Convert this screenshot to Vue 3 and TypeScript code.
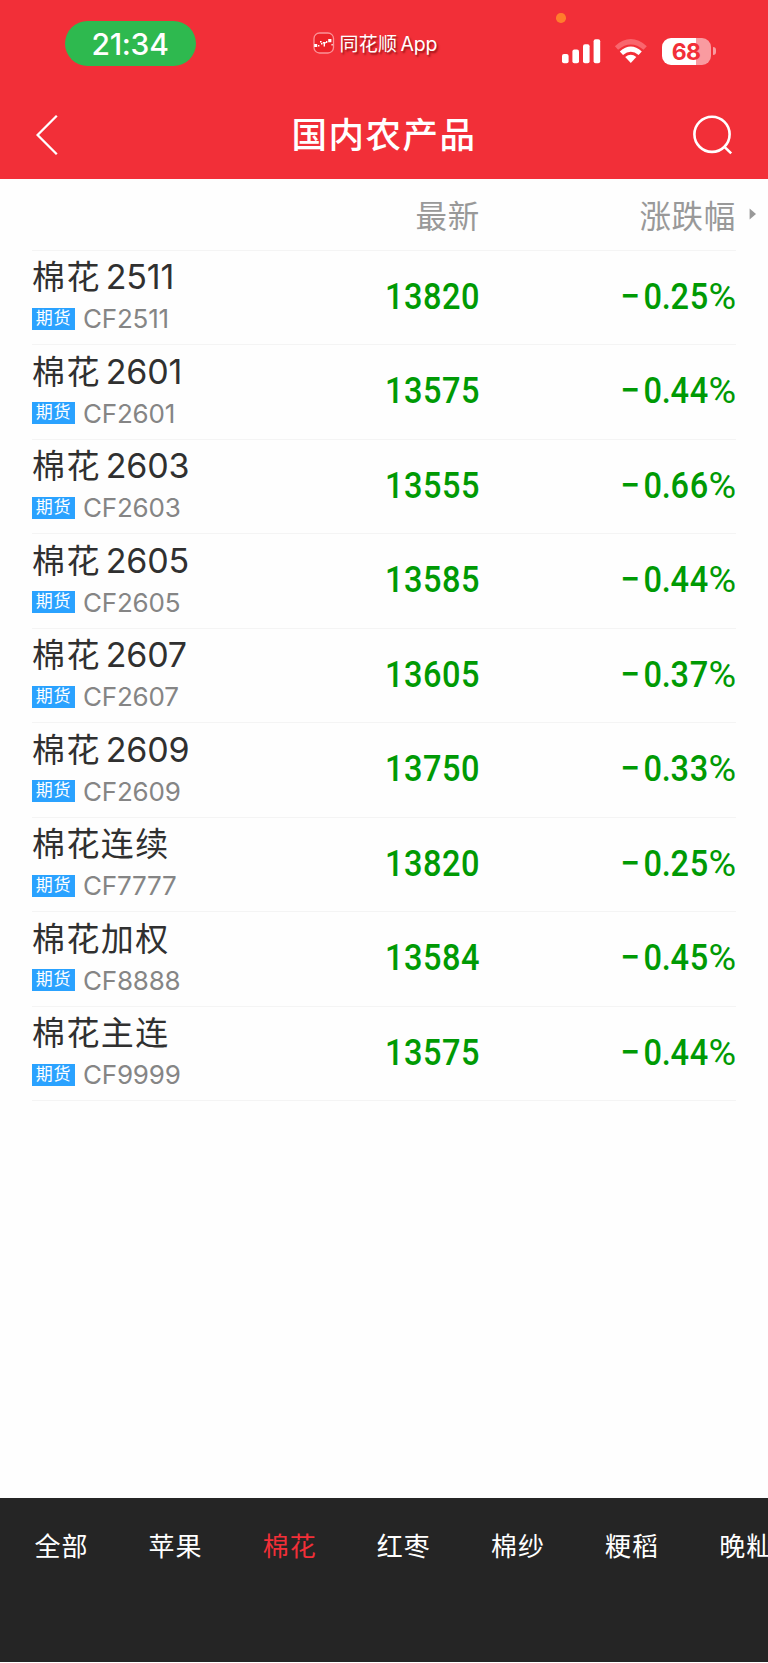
<script setup lang="ts">
interface Quote {
  name: string
  month: string
  code: string
  latest: string
  change: string
}

const quotes: Quote[] = [
  { name: '棉花', month: '2511', code: 'CF2511', latest: '13820', change: '25' },
  { name: '棉花', month: '2601', code: 'CF2601', latest: '13575', change: '44' },
  { name: '棉花', month: '2603', code: 'CF2603', latest: '13555', change: '66' },
  { name: '棉花', month: '2605', code: 'CF2605', latest: '13585', change: '44' },
  { name: '棉花', month: '2607', code: 'CF2607', latest: '13605', change: '37' },
  { name: '棉花', month: '2609', code: 'CF2609', latest: '13750', change: '33' },
  { name: '棉花连续', month: '', code: 'CF7777', latest: '13820', change: '25' },
  { name: '棉花加权', month: '', code: 'CF8888', latest: '13584', change: '45' },
  { name: '棉花主连', month: '', code: 'CF9999', latest: '13575', change: '44' },
]

const tabs: string[] = ['全部', '苹果', '棉花', '红枣', '棉纱', '粳稻', '晚籼']
const activeTab = '棉花'
</script>

<template>
  <div class="screen">
    <header class="top">
      <div class="status">
        <div class="clock">21:34</div>
        <div class="brand">
          <svg class="brand-icon" width="22" height="22" viewBox="0 0 22 22">
            <rect x="1" y="1" width="19.5" height="20" rx="5.5" fill="#ec2229" stroke="#fa9297" stroke-width="1.3" />
            <path d="M1.2 12h3v3h-3zM5 13h1.4v1.6H5zM7 9h1.6v1.4H7zM8 11h1.4v1.4H8zM9.8 10h3v1.4h-.8v3h-1.4v-3h-.8zM13 9h1.3v2H13zM15.2 7h3.2v3.2h-3.2zM18.5 12h1.2v1.6h-1.2z" fill="#fff" />
          </svg>
          <span class="brand-cn">同花顺</span>
          <span class="brand-en">App</span>
        </div>
        <div class="indicators">
          <i class="dot"></i>
          <svg class="signal" width="39" height="25" viewBox="0 0 39 25" fill="#fff">
            <rect x="0" y="15" width="6.6" height="9.3" rx="2" />
            <rect x="10.4" y="10.4" width="6.6" height="13.9" rx="2" />
            <rect x="21" y="5.2" width="6.6" height="19.1" rx="2" />
            <rect x="31.6" y="0.2" width="6.6" height="24.1" rx="2" />
          </svg>
          <svg class="wifi" width="34" height="25" viewBox="0 0 34 25">
            <path d="M0.9 7.2Q16.7 -7 32.8 7.2L29.5 10.8Q16.8 0.2 4.1 10.8Z" fill="#f9666d" />
            <path d="M5.8 12.4Q16.8 2.6 27.8 12.4L24.6 15.9Q16.8 9.4 9 15.9Z" fill="#fff" />
            <path d="M11.2 18Q16.8 13.6 22.3 18L16.8 24Z" fill="#fff" />
          </svg>
          <div class="battery">68</div>
          <i class="nub"></i>
        </div>
      </div>
      <nav class="nav">
        <svg width="24" height="40" viewBox="0 0 24 40" fill="none" stroke="#fff" stroke-width="2.3">
          <path d="M20.8 0.8L1.6 20L20.8 39.2" />
        </svg>
        <h1>国内农产品</h1>
        <svg width="40" height="40" viewBox="0 0 40 40" fill="none" stroke="#fff" stroke-width="2.6">
          <circle cx="19" cy="19.3" r="17.6" />
          <path d="M31.2 31.6L38.2 38.4" />
        </svg>
      </nav>
    </header>

    <main>
      <div class="columns">
        <span class="col-latest">最新</span>
        <span class="col-change">涨跌幅</span>
        <svg class="more" width="8" height="12" viewBox="0 0 8 12"><path d="M0.6 0.4L7 6L0.6 11.6Z" fill="#999" /></svg>
      </div>
      <div v-for="q in quotes" :key="q.code" class="row">
        <div class="contract">
          <div class="name">{{ q.name }}<span v-if="q.month" class="month">{{ q.month }}</span></div>
          <div class="meta"><span class="tag">期货</span><span class="code">{{ q.code }}</span></div>
        </div>
        <div class="latest"><span class="num">{{ q.latest }}</span></div>
        <div class="change"><span class="num"><span class="minus">−</span>0<span class="point">.</span>{{ q.change }}<span class="pct">%</span></span></div>
      </div>
    </main>

    <footer class="tabs">
      <span v-for="t in tabs" :key="t" class="tab" :class="{ active: t === activeTab }">{{ t }}</span>
    </footer>
  </div>
</template>

<style>
body {
  background: #fff;
}
</style>

<style scoped>
.screen {
  display: flex;
  flex-direction: column;
  width: 768px;
  height: 1662px;
  overflow: hidden;
  background: #fefefe;
  font-family: Inter, "Noto Sans CJK SC", sans-serif;
}
.top {
  height: 179.3px;
  flex: none;
  background: #f22f38;
  color: #fff;
}
.status {
  display: flex;
  height: 88px;
  padding: 0 52px 0 64.5px;
}
.clock {
  width: 131px;
  height: 45px;
  margin-top: 21.4px;
  border-radius: 22.5px;
  background: #2eb94f;
  font-size: 30px;
  font-weight: 500;
  line-height: 46px;
  letter-spacing: -0.3px;
  text-align: center;
}
.brand {
  display: flex;
  align-items: center;
  height: 24px;
  margin: 32px 0 0 117.5px;
  text-shadow: 1.5px 2px 2px rgba(90, 0, 0, 0.6);
  white-space: nowrap;
}
.brand-icon {
  margin: -2px 4.5px 0 0;
}
.brand-cn {
  margin-top: 2px;
  font-size: 19px;
  line-height: 24px;
  letter-spacing: 0.3px;
}
.brand-en {
  margin: 0 0 0 3px;
  font-size: 19.5px;
  line-height: 24px;
  letter-spacing: -0.1px;
}
.indicators {
  position: relative;
  display: flex;
  align-items: center;
  height: 28px;
  margin: 37px 0 0 auto;
}
.dot {
  position: absolute;
  left: -5.6px;
  top: -24px;
  width: 9.6px;
  height: 9.6px;
  border-radius: 50%;
  background: #ff7d2c;
}
.wifi {
  margin: 0 14.5px 0 12.5px;
}
.battery {
  box-sizing: border-box;
  width: 49px;
  height: 27px;
  padding-right: 1px;
  border-radius: 9px;
  background: linear-gradient(90deg, #fff 34px, #f99ba0 34px);
  color: #f22f38;
  font-size: 23px;
  font-weight: 700;
  line-height: 28px;
  letter-spacing: -0.8px;
  text-align: center;
}
.nub {
  width: 3px;
  height: 8px;
  margin-left: 2px;
  border-radius: 0 4px 4px 0;
  background: #f99ba0;
}
.nav {
  display: flex;
  align-items: center;
  justify-content: space-between;
  height: 94px;
  padding: 0 34.5px 0 35.5px;
}
h1 {
  margin: 2px 0 0 15px;
  font-size: 35.5px;
  font-weight: 500;
  line-height: 50px;
  letter-spacing: 1.5px;
}
.columns {
  display: flex;
  align-items: center;
  box-sizing: border-box;
  height: 70.4px;
  margin: 0 11px 0 32px;
  color: #999;
  font-size: 31.5px;
  letter-spacing: 0.7px;
}
.col-latest,
.latest {
  width: 448px;
  text-align: right;
}
.col-change,
.change {
  width: 256px;
  text-align: right;
}
.more {
  margin-left: 12.5px;
}
.row {
  display: flex;
  box-sizing: border-box;
  height: 94.5px;
  margin: 0 32px;
  border-top: 1px solid #f4f4f4;
}
.row:last-child {
  height: 95.5px;
  border-bottom: 1px solid #f4f4f4;
}
.contract {
  width: 240px;
}
.row .latest {
  width: 208px;
}
.name {
  height: 40px;
  margin-top: 6.4px;
  color: #303030;
  font-size: 33px;
  line-height: 40px;
  letter-spacing: 1.4px;
  white-space: nowrap;
}
.month {
  margin-left: 5px;
  font-size: 34px;
  letter-spacing: -0.2px;
}
.meta {
  display: flex;
  align-items: center;
  height: 28px;
  margin-top: 7.8px;
}
.tag {
  width: 43px;
  height: 22px;
  background: #2aa2ff;
  color: #fff;
  font-size: 17px;
  line-height: 21px;
  letter-spacing: 0.8px;
  text-align: center;
}
.code {
  margin: 1px 0 0 8px;
  color: #858585;
  font-size: 26px;
  line-height: 28px;
  letter-spacing: -0.2px;
}
.num {
  display: inline-block;
  color: #009a04;
  font-family: Roboto, sans-serif;
  font-size: 37px;
  font-weight: 500;
  line-height: 92px;
  letter-spacing: 1px;
  transform: scaleX(0.88);
  transform-origin: right;
  white-space: nowrap;
}
.latest .num {
  letter-spacing: 0.6px;
}
.change .num {
  margin-right: -2px;
}
.minus {
  display: inline-block;
  margin-right: 3px;
  transform: scaleX(1.08);
  transform-origin: right;
}
.point {
  margin: 0 -1.4px;
}
.pct {
  display: inline-block;
  margin-left: 4px;
  font-weight: 400;
  transform: scaleX(1.16);
  transform-origin: right;
}
.tabs {
  display: flex;
  flex: none;
  gap: 60.1px;
  height: 163.8px;
  margin-top: auto;
  padding-left: 34.5px;
  box-sizing: border-box;
  background: #252525;
  color: #fff;
  font-size: 26px;
  line-height: 98px;
  letter-spacing: 1px;
  white-space: nowrap;
}
.tab {
  flex: none;
}
.tab.active {
  color: #f22f38;
}
</style>
